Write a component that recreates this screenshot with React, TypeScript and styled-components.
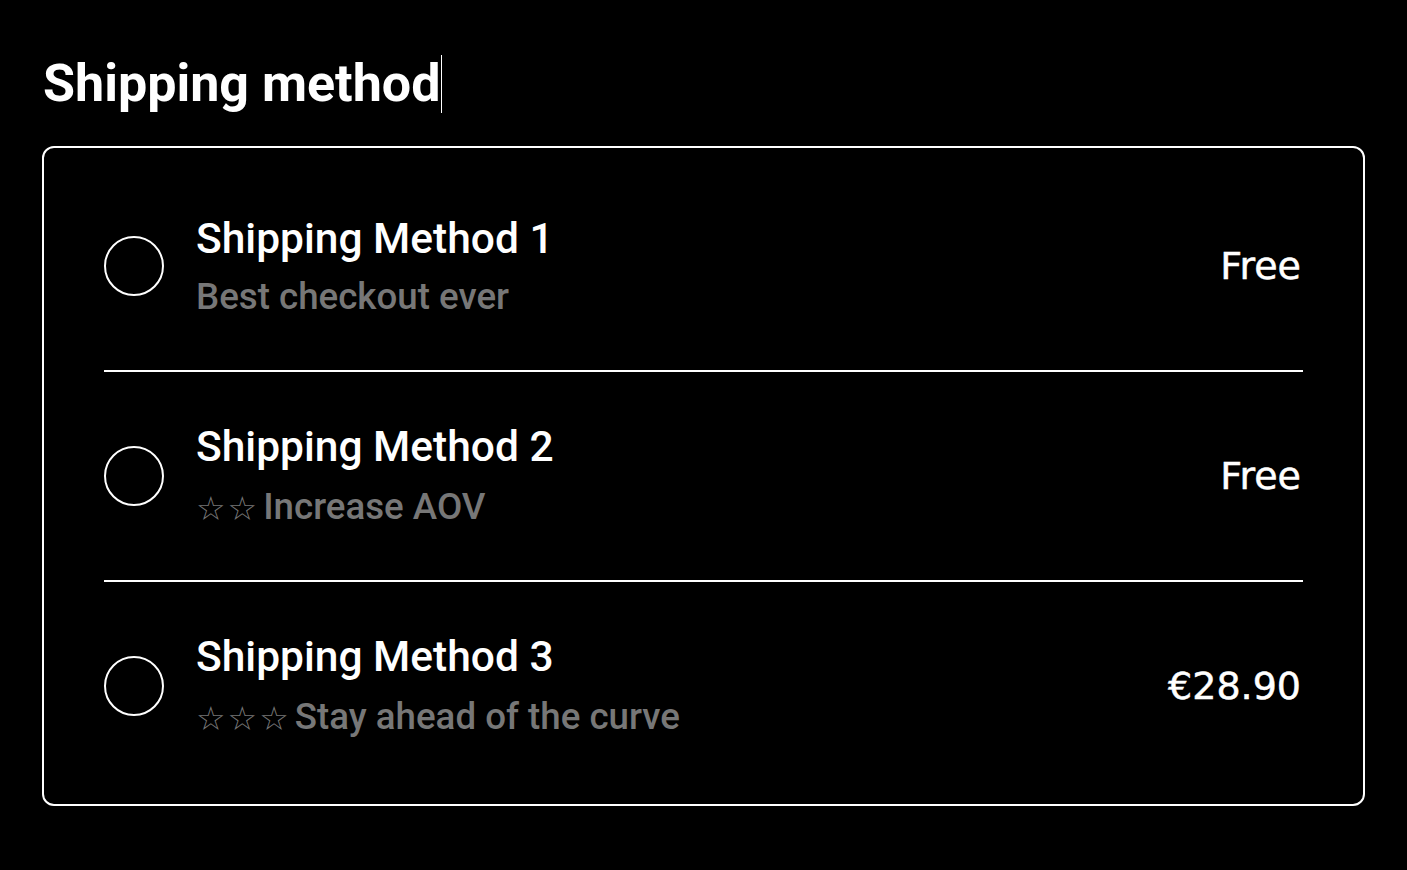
import styled, { createGlobalStyle } from 'styled-components';

const GlobalStyle = createGlobalStyle`
  html, body {
    margin: 0;
    padding: 0;
    background: #000;
  }
  body {
    font-family: Roboto, "Liberation Sans", sans-serif;
    color: #fff;
  }
`

const Page = styled.main`
  padding: 55px 42px 0 42px;
  width: 1323px;
`

const Heading = styled.h2`
  margin: 0 0 33px 1px;
  font-size: 52px;
  font-weight: 700;
  line-height: 58px;
`

// blinking text cursor left after the heading
const Caret = styled.span`
  display: inline-block;
  width: 1px;
  height: 58px;
  background: #fff;
  vertical-align: top;
  margin-left: 1px;
`

const MethodList = styled.div`
  border: 2px solid #fff;
  border-radius: 12px;
  padding: 14px 60px;
`

const MethodRow = styled.label`
  display: flex;
  align-items: center;
  height: 208px;
  border-bottom: 2px solid #fff;
  cursor: pointer;

  &:last-child {
    border-bottom: none;
  }
`

const Radio = styled.span`
  width: 56px;
  height: 56px;
  border: 2px solid #fff;
  border-radius: 50%;
  flex-shrink: 0;
  margin-right: 32px;
`

const Info = styled.div`
  display: flex;
  flex-direction: column;
  flex: 1;
  gap: 14px;
`

const MethodName = styled.div`
  font-size: 42.5px;
  font-weight: 500;
  line-height: 48px;
`

const MethodNote = styled.div`
  display: flex;
  align-items: center;
  font-size: 36.7px;
  font-weight: 500;
  line-height: 40px;
  color: #777;
`

const Stars = styled.span`
  font-family: "DejaVu Sans", sans-serif;
  font-size: 33px;
  font-weight: 400;
  letter-spacing: 2px;
  margin: 4px 4px 0 0;
`

const Price = styled.div`
  font-family: "DejaVu Sans", sans-serif;
  font-size: 38px;
  font-weight: 400;
  -webkit-text-stroke: 0.5px #fff;
  margin-right: 2px;
`

const methods = [
  { name: 'Shipping Method 1', stars: 0, note: 'Best checkout ever', price: 'Free' },
  { name: 'Shipping Method 2', stars: 2, note: 'Increase AOV', price: 'Free' },
  { name: 'Shipping Method 3', stars: 3, note: 'Stay ahead of the curve', price: '€28.90' },
]

export default function App() {
  return (
    <Page>
      <GlobalStyle />
      <Heading>Shipping method<Caret /></Heading>
      <MethodList>
        {methods.map((m) => (
          <MethodRow key={m.name}>
            <Radio />
            <Info>
              <MethodName>{m.name}</MethodName>
              <MethodNote>
                {m.stars > 0 && <Stars>{'☆'.repeat(m.stars)}</Stars>}
                {m.note}
              </MethodNote>
            </Info>
            <Price>{m.price}</Price>
          </MethodRow>
        ))}
      </MethodList>
    </Page>
  )
}
